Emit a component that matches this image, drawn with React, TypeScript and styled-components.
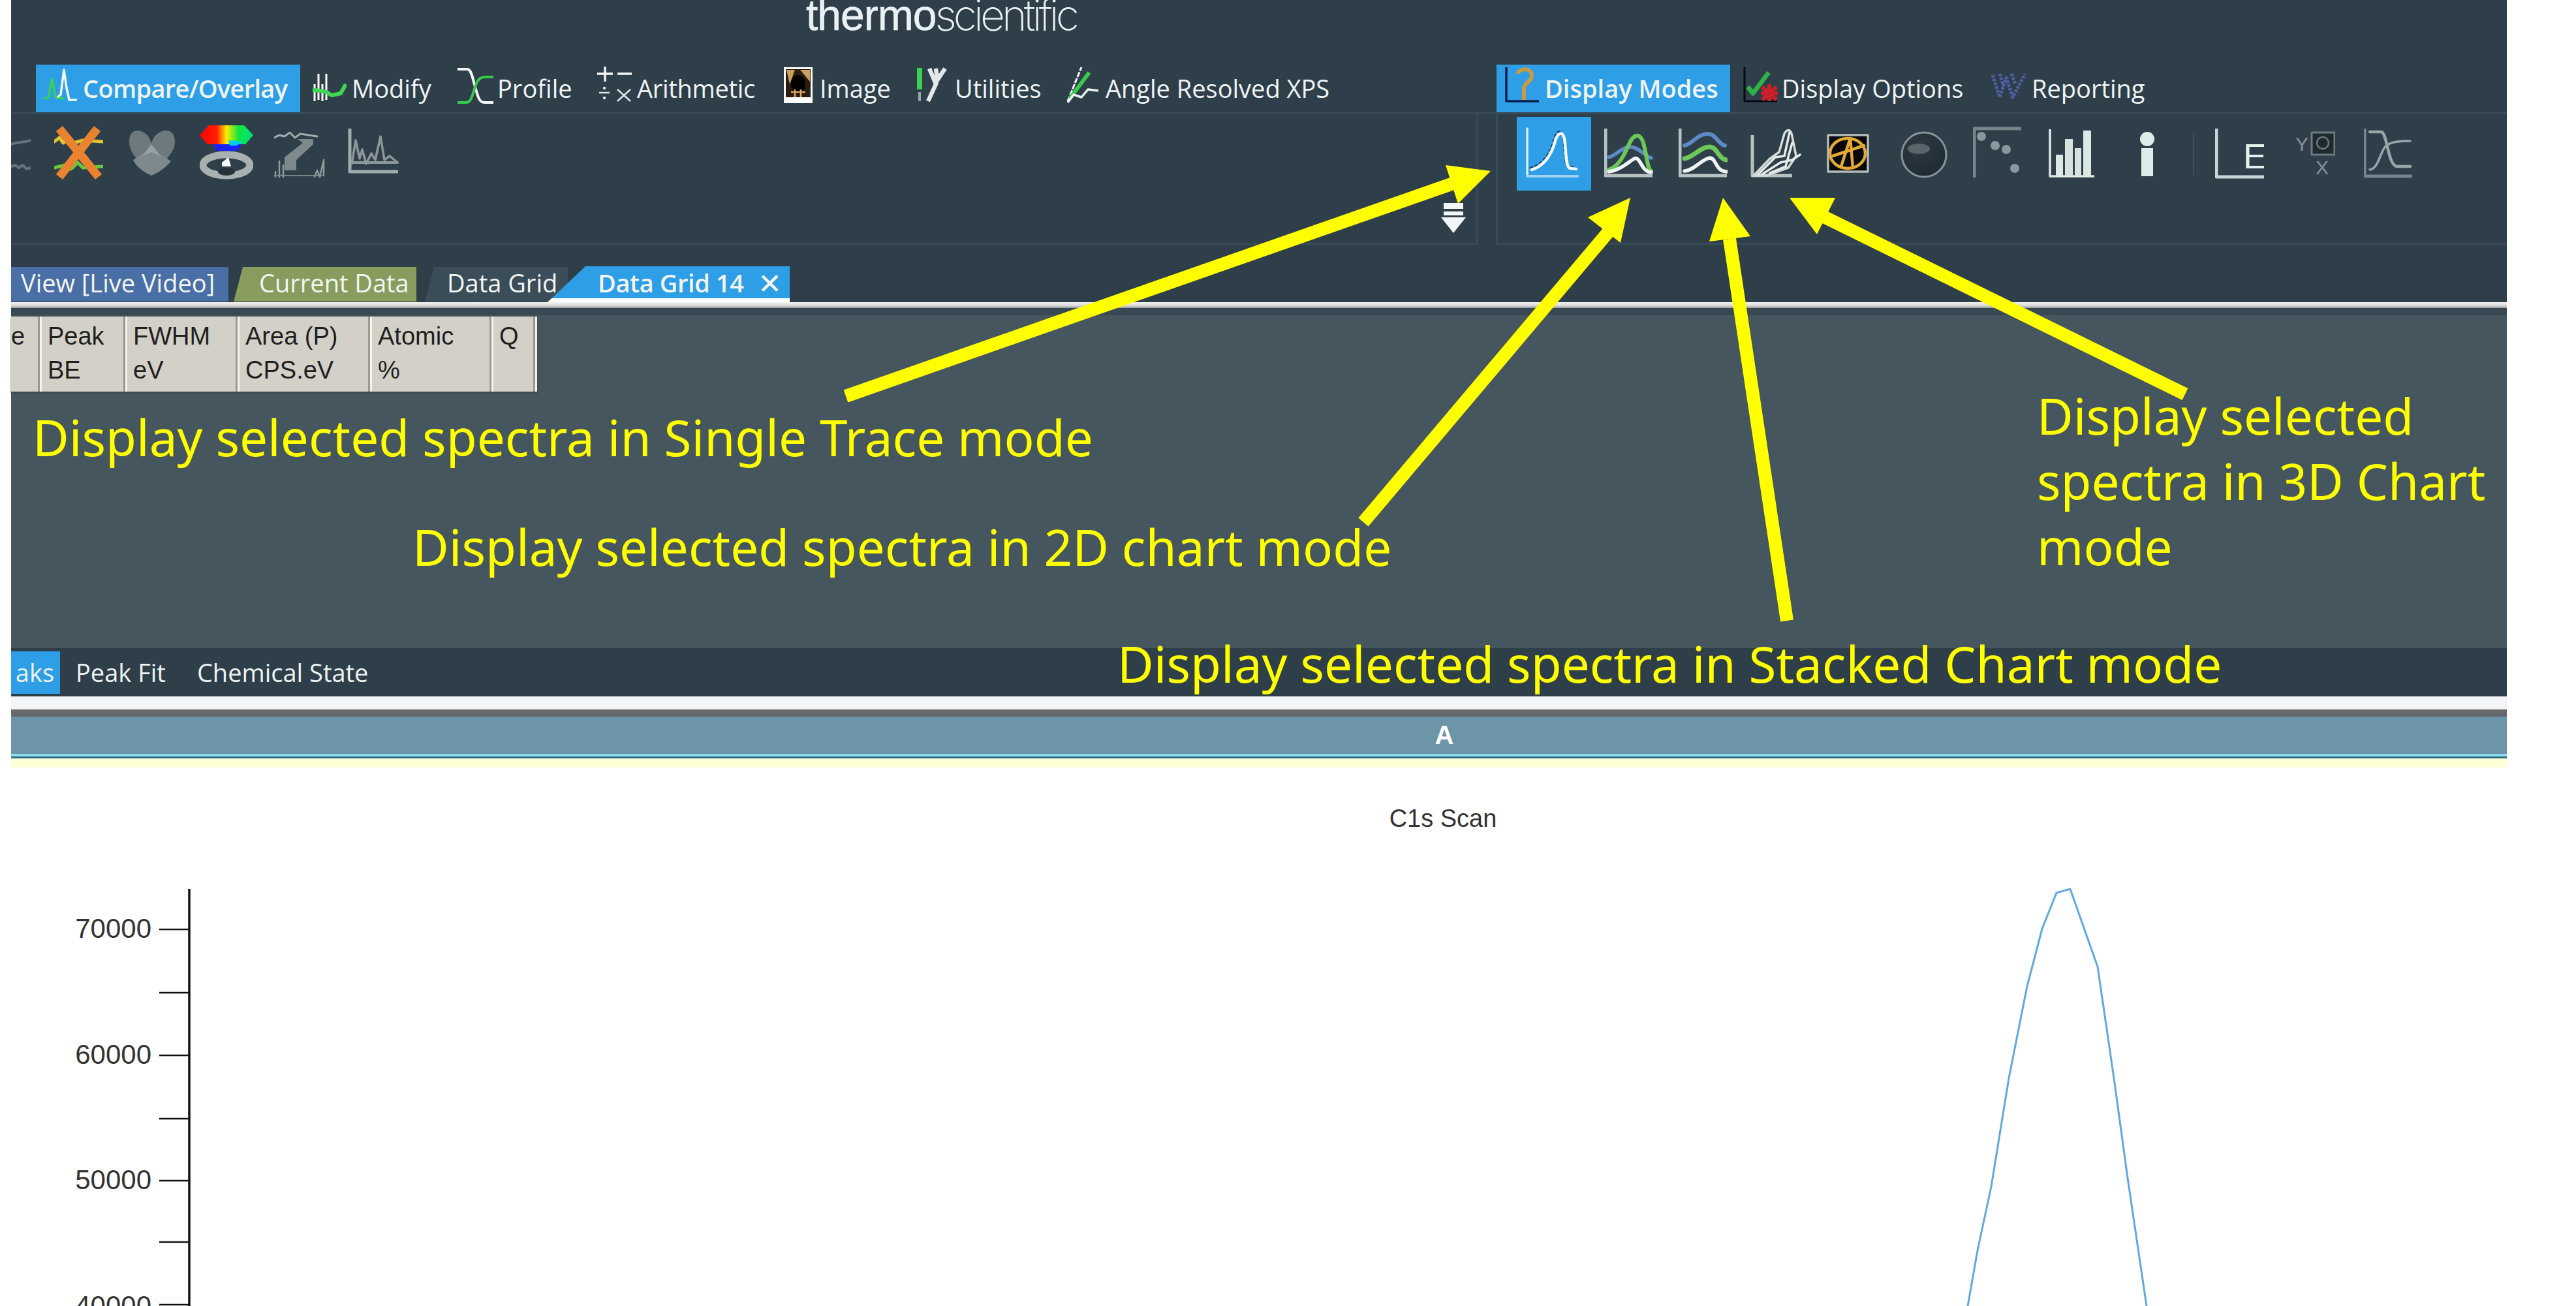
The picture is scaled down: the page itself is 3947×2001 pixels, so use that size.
import React from "react";
import styled, { createGlobalStyle } from "styled-components";

const Global = createGlobalStyle`
  html, body { margin: 0; padding: 0; background: #fff; overflow: hidden; }
  #root { width: 3947px; height: 2001px; }
`;

const UI = `"Open Sans", "Noto Sans", sans-serif`;
const DARK = "#2f3f4a";

const Stage = styled.div`
  position: relative;
  width: 3947px;
  height: 2001px;
  box-sizing: border-box;
  padding: 0 106px 0 17px;
  background: #fff;
  overflow: hidden;
  font-family: ${UI};
`;
const Frame = styled.div`
  display: flex;
  flex-direction: column;
  height: 100%;
`;
const Header = styled.header`
  flex: none;
  height: 463px;
  background: ${DARK};
  display: flex;
  flex-direction: column;
`;
const LogoRow = styled.div`
  height: 99px;
  padding-left: 1218px;
  display: flex;
  align-items: flex-start;
  color: #e9f1f4;
  font-size: 66px;
  line-height: 46px;
  white-space: nowrap;
`;
const LogoBold = styled.span`
  font-family: "Liberation Sans", sans-serif;
  letter-spacing: -1px;
  -webkit-text-stroke: 0.6px #e9f1f4;
`;
const LogoLight = styled.span`
  font-family: Inter, sans-serif;
  font-weight: 200;
  letter-spacing: -4.9px;
  margin-left: -2px;
`;
const MenuBar = styled.nav`
  height: 73px;
  display: flex;
  flex: none;
  padding-left: 38px;
`;
const MenuItem = styled.div<{ $w: number; $active?: boolean; $gap?: number; $iconGap?: number; $pad?: number; $bold?: boolean; $track?: number }>`
  width: ${(p) => p.$w}px;
  flex: none;
  box-sizing: border-box;
  margin-left: ${(p) => p.$gap ?? 0}px;
  padding-left: ${(p) => p.$pad ?? 0}px;
  display: flex;
  align-items: center;
  gap: ${(p) => p.$iconGap ?? 8}px;
  background: ${(p) => (p.$active ? "#2e9fe6" : "transparent")};
  color: #eef4f6;
  font-size: 38px;
  line-height: 67px;
  font-weight: ${(p) => (p.$bold ? 600 : 500)};
  letter-spacing: ${(p) => p.$track ?? 0}px;
  white-space: nowrap;
`;
const MenuIcon = styled.svg`
  display: block;
  flex: none;
  height: 73px;
`;
const Ribbon = styled.div`
  height: 203px;
  flex: none;
  display: flex;
  border-top: 3px solid #374a55;
  box-sizing: border-box;
`;
const RibbonPanel = styled.div<{ $w: number; $pad: number; $gapRight: number; $open?: boolean }>`
  position: relative;
  width: ${(p) => p.$w}px;
  margin-right: ${(p) => p.$gapRight}px;
  flex: none;
  box-sizing: border-box;
  padding: 4px 0 0 ${(p) => p.$pad}px;
  border-bottom: 3px solid #374a55;
  border-${(p) => (p.$open ? "left" : "right")}: 3px solid #374a55;
  display: flex;
  align-items: flex-start;
`;
const Tool = styled.div<{ $w: number; $gap?: number; $active?: boolean; $pad?: number }>`
  flex: none;
  width: ${(p) => p.$w}px;
  height: 113px;
  margin-left: ${(p) => p.$gap ?? 0}px;
  background: ${(p) => (p.$active ? "#2e9fe6" : "transparent")};
`;
const ToolIcon = styled.svg`
  display: block;
  width: 100%;
  height: 113px;
`;
const CollapseGlyph = styled.svg`
  position: absolute;
  left: 2191px;
  top: 135px;
  width: 38px;
  height: 48px;
`;
const TabStrip = styled.div`
  margin-top: 33px;
  height: 55px;
  display: flex;
  flex: none;
`;
const TabBase = styled.div<{ $w: number; $pad: number; $bg: string; $gap?: number; $slant?: number }>`
  flex: none;
  width: ${(p) => p.$w}px;
  margin-left: ${(p) => p.$gap ?? 0}px;
  height: 53px;
  margin-top: 1px;
  box-sizing: border-box;
  padding-left: ${(p) => p.$pad}px;
  background: ${(p) => p.$bg};
  color: #f2f6f4;
  font-size: 38px;
  line-height: 48px;
  white-space: nowrap;
  clip-path: polygon(${(p) => p.$slant ?? 0}px 0, 100% 0, 100% 100%, 0 100%);
`;
const ActiveTab = styled(TabBase)`
  position: relative;
  height: 55px;
  margin-top: 0;
  font-weight: 600;
  letter-spacing: -0.4px;
  display: flex;
  align-items: center;
  justify-content: space-between;
  padding-right: 12px;
  border-bottom: 6px solid #fff;
`;
const TabClose = styled.span`
  font-weight: 400;
  font-size: 44px;
`;
const WhiteRule = styled.div`
  flex: none;
  height: 9px;
  background: linear-gradient(#f4f4f4, #d8d8d8 60%, #8f9699);
`;
const GridArea = styled.section`
  flex: none;
  height: 521px;
  box-sizing: border-box;
  background: #46565f;
  border-top: 11px solid #394953;
`;
const GridHeader = styled.div`
  display: flex;
  height: 115px;
  margin-top: 2px;
  width: fit-content;
  box-shadow: 0 3px 2px #3a4850;
`;
const GridCell = styled.div<{ $w: number; $pad?: number }>`
  width: ${(p) => p.$w}px;
  box-sizing: border-box;
  padding: 4px 0 0 ${(p) => p.$pad ?? 9}px;
  background: #d3d0c8;
  border-right: 3px solid #f4f3ee;
  box-shadow: inset -3px 0 0 #9a988f;
  color: #1f1f1f;
  font-family: "Liberation Sans", sans-serif;
  font-size: 38px;
  line-height: 52px;
  white-space: pre-line;
  overflow: hidden;
`;
const BottomTabs = styled.div`
  flex: none;
  height: 74px;
  background: ${DARK};
  display: flex;
  align-items: center;
  color: #eef3f3;
  font-size: 38px;
`;
const BottomActive = styled.div`
  width: 75px;
  height: 65px;
  background: #2e9fe6;
  display: flex;
  align-items: center;
  justify-content: flex-end;
  padding-right: 9px;
  box-sizing: border-box;
  overflow: hidden;
`;
const BottomTab = styled.div<{ $gap: number }>`
  margin-left: ${(p) => p.$gap}px;
`;
const SectionRule = styled.div`
  flex: none;
  height: 31px;
  background: linear-gradient(#f3f4f5 0, #f3f4f5 64%, #6b6a6c 66%, #64686c 100%);
`;
const ChartBand = styled.div`
  flex: none;
  height: 64px;
  box-sizing: border-box;
  background: #6c95a8;
  border-bottom: 3px solid #2d6e80;
  box-shadow: inset 0 -4px 0 #8fdcf5;
  display: flex;
  align-items: center;
  justify-content: center;
  padding: 0 0 4px 568px;
  color: #fff;
  font-weight: 700;
  font-size: 40px;
  font-family: "Liberation Sans", sans-serif;
`;
const PaleStripe = styled.div`
  flex: none;
  height: 14px;
  background: #fdfdd8;
`;
const Chart = styled.svg`
  display: block;
  flex: 1;
  width: 100%;
  min-height: 0;
`;
const ChartOverlay = styled.svg`
  position: absolute;
  left: 0;
  top: 0;
  width: 3947px;
  height: 2001px;
  pointer-events: none;
`;
const Callout = styled.div<{ $x: number; $y: number; $w?: number }>`
  position: absolute;
  left: ${(p) => p.$x}px;
  top: ${(p) => p.$y}px;
  width: ${(p) => (p.$w ? `${p.$w}px` : "auto")};
  color: #ffff00;
  font-family: "Noto Sans", sans-serif;
  font-size: 76.4px;
  line-height: 100px;
  white-space: ${(p) => (p.$w ? "normal" : "nowrap")};
`;

const Menu = ({ w, children }: { w: number; children: React.ReactNode }) => (
  <MenuIcon width={w} viewBox={`0 0 ${w} 73`} fill="none" strokeLinejoin="round">
    {children}
  </MenuIcon>
);

const Tl = ({ w, children, ...rest }: { w: number; gap?: number; active?: boolean; children: React.ReactNode }) => (
  <Tool $w={w} $gap={rest.gap} $active={rest.active}>
    <ToolIcon viewBox={`0 0 ${w} 113`} fill="none" strokeLinejoin="round" strokeLinecap="round">
      {children}
    </ToolIcon>
  </Tool>
);

const GREY = "#b9c2c2";
const GREEN = "#6cc85a";
const BLUE = "#5f8bc4";

const arrows = [
  { tail: "1296,607 2258,270", head: "2284,262 2215,253 2234,312" },
  { tail: "2089,800 2474,344", head: "2498,303 2433,333 2483,372" },
  { tail: "2738,951 2650,366", head: "2640,303 2619,370 2682,362" },
  { tail: "3348,604 2790,330", head: "2742,303 2812,303 2784,359" },
];

const peak =
  "3015,2001 3030,1916 3051,1818 3078,1652 3106,1511 3129,1423 3151,1368 3172,1362 3214,1481 3239,1652 3260,1805 3289,2001";

export default function App() {
  return (
    <Stage>
      <Global />
      <Frame>
        <Header>
          <LogoRow>
            <LogoBold>thermo</LogoBold>
            <LogoLight>scientific</LogoLight>
          </LogoRow>
          <MenuBar>
            <MenuItem $w={405} $active $pad={11} $iconGap={7} $bold $track={-0.7}>
              <Menu w={54}>
                <path d="M1 52 L8 50 L14 22 L19 50 L32 52" stroke="#37d05a" strokeWidth="3.5" />
                <path d="M22 50 L27 46 L32 8 L36 36 L40 54 L52 54" stroke="#f2fbff" strokeWidth="3.5" />
              </Menu>
              Compare/Overlay
            </MenuItem>
            <MenuItem $w={222} $gap={18}>
              <Menu w={53}>
                <path d="M4 56 V30 M10 54 V14 M16 56 V30 M22 54 V14" stroke="#fff" strokeWidth="3" />
                <path d="M1 38 L22 42 L30 47 L44 44 L52 30" stroke="#3ed654" strokeWidth="6" />
              </Menu>
              Modify
            </MenuItem>
            <MenuItem $w={214} $iconGap={4}>
              <Menu w={58}>
                <path d="M1 7 H16 C22 7 24 20 28 34 C32 48 34 58 42 58 H56" stroke="#f5f8f8" strokeWidth="4" />
                <path d="M1 58 H14 C22 58 24 46 28 34 C32 22 36 19 44 19 H56" stroke="#37c94c" strokeWidth="4" />
              </Menu>
              Profile
            </MenuItem>
            <MenuItem $w={284} $track={-0.3}>
              <Menu w={54}>
                <path d="M1 14 H25 M13 3 V26 M32 14 H54" stroke="#f3f6f6" strokeWidth="3.5" />
                <path d="M4 43 H20 M32 38 L52 56 M52 38 L32 56" stroke="#dfe7e7" strokeWidth="2.5" />
                <circle cx="12" cy="36" r="2.2" fill="#dfe7e7" />
                <circle cx="12" cy="51" r="2.2" fill="#dfe7e7" />
              </Menu>
              Arithmetic
            </MenuItem>
            <MenuItem $w={204} $pad={2} $iconGap={10}>
              <Menu w={46}>
                <rect x="1" y="4" width="44" height="55" fill="#fff" />
                <rect x="4" y="7" width="38" height="43" fill="#2a1c10" />
                <path d="M5 8 L18 8 L10 30 Z M26 8 H41 V26 Z" fill="#c9a15a" />
                <ellipse cx="23" cy="30" rx="11" ry="14" fill="#000" />
                <path d="M12 42 H34 M18 38 V50 M27 38 V50" stroke="#d9a860" strokeWidth="2.5" />
              </Menu>
              Image
            </MenuItem>
            <MenuItem $w={229} $pad={2} $iconGap={7}>
              <Menu w={52}>
                <path d="M5 5 V38" stroke="#38d24f" strokeWidth="8" />
                <path d="M5 42 V56" stroke="#9aa6aa" strokeWidth="4" />
                <path d="M18 56 L30 30 L20 6 M30 30 L32 22 L30 6 M32 24 L44 6" stroke="#e3e8e8" strokeWidth="6.5" />
              </Menu>
              Utilities
            </MenuItem>
            <MenuItem $w={662} $pad={2} $iconGap={7}>
              <Menu w={54}>
                <path d="M3 56 L24 4" stroke="#f4f7f7" strokeWidth="3" strokeDasharray="8 2" />
                <path d="M6 52 L36 12" stroke="#37c94c" strokeWidth="6" />
                <path d="M3 58 L12 46 L24 50 L34 38 L50 40" stroke="#eef3f3" strokeWidth="3.5" />
              </Menu>
              Angle Resolved XPS
            </MenuItem>
            <MenuItem $w={358} $active $pad={12} $iconGap={8} $bold>
              <Menu w={54}>
                <path d="M3 4 V56 H53" stroke="#0a1c4e" strokeWidth="3.5" />
                <path d="M20 14 C24 5 42 4 42 17 C42 27 30 27 30 36 V54" stroke="#c99a45" strokeWidth="6" />
              </Menu>
              Display Modes
            </MenuItem>
            <MenuItem $w={380} $gap={19} $iconGap={5}>
              <Menu w={55}>
                <path d="M3 4 V56 H53" stroke="#050a14" strokeWidth="3" />
                <path d="M8 34 L16 44 L40 12" stroke="#2fb24a" strokeWidth="7" />
                <path d="M30 34 L52 54 M52 34 L30 54 M41 30 V56 M28 44 H54" stroke="#c9202a" strokeWidth="6" />
              </Menu>
              Display Options
            </MenuItem>
            <MenuItem $w={300} $iconGap={8}>
              <Menu w={55}>
                <path
                  d="M3 16 L14 50 L24 20 L34 50 L53 14 M14 14 L20 34 M32 14 L38 30"
                  stroke="#4f5ea8"
                  strokeWidth="5"
                  strokeDasharray="4 2"
                />
              </Menu>
              Reporting
            </MenuItem>
          </MenuBar>
          <Ribbon>
            <RibbonPanel $w={2248} $pad={0} $gapRight={27}>
              <Tl w={30}>
                <path d="M0 42 C10 38 18 40 30 36" stroke="#64727a" strokeWidth="4" />
                <path d="M0 76 L6 74 L12 78 L18 74 L24 80 L30 78" stroke="#64727a" strokeWidth="4" />
              </Tl>
              <Tl w={75} gap={36}>
                <path d="M0 38 L8 32 L14 40 L22 34 L30 40 L44 36 L74 38" stroke="#e4c436" strokeWidth="5" />
                <path d="M0 78 L16 74 L26 80 L36 70 L44 78 L74 76" stroke="#67c93c" strokeWidth="5" />
                <path d="M8 18 L68 92 M66 18 L8 92" stroke="#ea8330" strokeWidth="13" strokeLinecap="butt" />
              </Tl>
              <Tl w={74} gap={38}>
                <path d="M36 40 C30 18 2 12 2 38 C2 54 14 66 36 90 C58 66 72 54 72 38 C72 12 42 18 36 40 Z" fill="#6e797d" />
                <path d="M36 48 L66 68 C58 78 46 86 36 90 C26 86 12 76 8 66 Z" fill="#7d898d" />
                <path d="M36 42 L50 60 L36 54 L22 60 Z" fill="#99a3a6" />
              </Tl>
              <Tl w={82} gap={36}>
                <defs>
                  <linearGradient id="rb" x1="0" x2="1">
                    <stop offset="0" stopColor="#ff0000" />
                    <stop offset="0.32" stopColor="#ff2000" />
                    <stop offset="0.5" stopColor="#ffee00" />
                    <stop offset="0.72" stopColor="#14e63c" />
                    <stop offset="1" stopColor="#00e080" />
                  </linearGradient>
                </defs>
                <path d="M14 13 H68 L82 28 L70 42 H12 L0 28 Z" fill="url(#rb)" />
                <path d="M20 42 H64 L58 52 H26 Z" fill="#1a22ff" />
                <path d="M44 36 L68 38 L56 44 H46 Z" fill="#00cfee" />
                <ellipse cx="41" cy="74" rx="36" ry="16" stroke="#a9b0b0" strokeWidth="11" strokeDasharray="4 2" />
                <path d="M34 70 L44 62 L48 76 H34 Z" fill="#fff" />
                <ellipse cx="41" cy="84" rx="13" ry="6" fill="#26333b" />
              </Tl>
              <Tl w={78} gap={32}>
                <path d="M0 32 L8 28 L16 30 L24 24 L32 32 L40 26 L66 30" stroke="#a2acae" strokeWidth="3" strokeDasharray="3 1" />
                <path d="M36 34 H60 V42 L34 66 V82 H16 V62 L44 40" fill="#7e898c" />
                <path d="M8 92 V68 M2 92 V84 M14 92 V74 M62 92 L66 82 L70 92 L76 66 V90" stroke="#8f9a9c" strokeWidth="2.5" />
                <path d="M0 90 H76" stroke="#7f8a8d" strokeWidth="2" strokeDasharray="3 2" />
              </Tl>
              <Tl w={79} gap={35}>
                <path d="M3 18 V84 H77" stroke="#a0abae" strokeWidth="5" strokeLinecap="butt" />
                <path
                  d="M6 72 L12 36 L18 64 L22 50 L28 72 L36 56 L42 66 L50 30 L56 66 L64 60 L76 70"
                  stroke="#8c979a"
                  strokeWidth="3.5"
                />
                <path d="M8 70 H76" stroke="#8c979a" strokeWidth="4" strokeDasharray="6 2" />
              </Tl>
              <CollapseGlyph viewBox="0 0 38 46" fill="#f3f6f6">
                <rect x="4" y="0" width="30" height="9" />
                <rect x="4" y="13" width="30" height="6" />
                <path d="M0 22 H38 L19 46 Z" />
              </CollapseGlyph>
            </RibbonPanel>
            <RibbonPanel $w={1549} $pad={29} $gapRight={0} $open>
              <Tl w={114} active>
                <path d="M16 18 V91" stroke="#d6eef8" strokeWidth="3.5" />
                <path d="M16 91 H93" stroke="#9fd2f0" strokeWidth="4" />
                <path
                  d="M21 78 C36 75 50 60 56 38 C60 20 68 18 71 32 C74 50 72 75 80 76 L89 78"
                  stroke="#1c4a70"
                  strokeWidth="3"
                  strokeDasharray="3 5"
                />
                <path d="M23 81 C38 77 52 62 58 40 C62 24 70 20 73 34 C76 50 74 77 82 79 L91 80" stroke="#f5fbff" strokeWidth="4.5" />
              </Tl>
              <Tl w={75} gap={20}>
                <path d="M2 18 V90 H74" stroke={GREY} strokeWidth="5" strokeLinecap="butt" />
                <path d="M7 62 C16 60 28 46 40 46 C52 46 62 60 72 63" stroke={BLUE} strokeWidth="5.5" />
                <path d="M7 81 C22 76 30 60 38 42 C44 28 54 22 60 40 C66 62 66 80 72 83" stroke={GREEN} strokeWidth="6" />
                <path d="M7 84 C24 82 36 70 46 64 C56 60 56 84 72 85" stroke="#eef3f3" strokeWidth="5.5" />
              </Tl>
              <Tl w={75} gap={39}>
                <path d="M2 18 V90 H74" stroke={GREY} strokeWidth="5" strokeLinecap="butt" />
                <path d="M9 44 C20 42 30 26 44 26 C58 26 60 42 71 44" stroke={BLUE} strokeWidth="6" />
                <path d="M9 64 C22 62 34 46 47 46 C60 46 60 64 73 66" stroke={GREEN} strokeWidth="7" />
                <path d="M9 83 C24 82 36 64 48 63 C58 63 56 84 74 84" stroke="#eef3f3" strokeWidth="5.5" />
              </Tl>
              <Tl w={78} gap={35}>
                <path d="M3 28 V90 H64" stroke={GREY} strokeWidth="5" strokeLinecap="butt" />
                <path d="M5 90 L30 64 L44 54 L52 26 C56 18 62 18 64 30 L70 60 L58 78 L24 90 Z" stroke="#d5dcdc" strokeWidth="3.5" />
                <path d="M12 88 L38 62 L52 60 L60 24 M18 88 L46 70 L64 66 L76 58 M30 86 L54 76 L64 40" stroke="#e6ebeb" strokeWidth="3.5" />
              </Tl>
              <Tl w={65} gap={39}>
                <rect x="2" y="28" width="61" height="56" fill="#080808" stroke="#b4bcbc" strokeWidth="3.5" />
                <ellipse cx="32" cy="56" rx="27" ry="23" stroke="#e3a934" strokeWidth="4.5" />
                <path d="M36 33 L22 76 M36 33 L40 78 M9 60 L57 44" stroke="#e3a934" strokeWidth="4.5" />
              </Tl>
              <Tl w={72} gap={48}>
                <defs>
                  <radialGradient id="sp" cx="0.4" cy="0.3" r="0.8">
                    <stop offset="0" stopColor="#2c3a42" />
                    <stop offset="1" stopColor="#1d2a31" />
                  </radialGradient>
                </defs>
                <circle cx="36" cy="58" r="34" fill="url(#sp)" stroke="#87949a" strokeWidth="3" />
                <ellipse cx="28" cy="49" rx="17" ry="8" fill="#59656a" />
              </Tl>
              <Tl w={74} gap={39}>
                <path d="M74 18 H2 V93" stroke="#76868b" strokeWidth="5" strokeLinecap="butt" />
                <circle cx="13" cy="30" r="7" fill="#8a989d" />
                <circle cx="34" cy="44" r="7" fill="#8a989d" />
                <circle cx="51" cy="50" r="7" fill="#8a989d" />
                <circle cx="64" cy="79" r="7" fill="#8a989d" />
              </Tl>
              <Tl w={70} gap={42}>
                <path d="M2 19 V91 H70" stroke="#dfe9e6" strokeWidth="3.5" strokeLinecap="butt" />
                <rect x="11" y="58" width="11" height="32" fill="#dce8e4" />
                <rect x="25" y="34" width="12" height="56" fill="#d5e2de" />
                <rect x="40" y="48" width="10" height="42" fill="#d5e2de" />
                <rect x="53" y="21" width="12" height="69" fill="#dce8e4" />
              </Tl>
              <Tl w={24} gap={69}>
                <circle cx="12" cy="34" r="11" fill="#dceee9" />
                <rect x="3" y="48" width="18" height="43" fill="#dceee9" />
              </Tl>
              <Tl w={2} gap={58}>
                <path d="M1 24 V88" stroke="#3c505b" strokeWidth="2" />
              </Tl>
              <Tl w={75} gap={32}>
                <path d="M2 18 V92 H75" stroke="#c5d7d6" strokeWidth="5" strokeLinecap="butt" />
                <text x="43" y="79" fill="#e6f0ee" fontFamily="Liberation Sans, sans-serif" fontSize="54">
                  E
                </text>
              </Tl>
              <Tl w={64} gap={45}>
                <text x="3" y="52" fill="#85929a" fontFamily="Liberation Sans, sans-serif" fontSize="30">
                  Y
                </text>
                <rect x="28" y="24" width="35" height="34" fill="#1f2a30" stroke="#6e7a7f" strokeWidth="3" />
                <circle cx="45" cy="40" r="9" stroke="#6e7a7f" strokeWidth="2.5" />
                <text x="34" y="88" fill="#85929a" fontFamily="Liberation Sans, sans-serif" fontSize="30">
                  X
                </text>
              </Tl>
              <Tl w={74} gap={44}>
                <path d="M1 18 V91 H74" stroke="#74858c" strokeWidth="5" strokeLinecap="butt" />
                <path d="M9 23 H26 C36 23 36 72 50 76 H71" stroke="#98a4a8" strokeWidth="4.5" />
                <path d="M9 81 C24 80 26 44 38 42 C44 38 56 37 71 37" stroke="#98a4a8" strokeWidth="3.5" />
              </Tl>
            </RibbonPanel>
          </Ribbon>
          <TabStrip>
            <TabBase $w={333} $pad={15} $bg="#4a6ea6">
              View [Live Video]
            </TabBase>
            <TabBase $w={280} $pad={39} $bg="#889c5e" $gap={8} $slant={14}>
              Current Data
            </TabBase>
            <TabBase $w={219} $pad={34} $bg="#3b4d59" $gap={13} $slant={14}>
              Data Grid
            </TabBase>
            <ActiveTab $w={371} $pad={77} $bg="#2e9fe6" $gap={-31} $slant={58}>
              Data Grid 14
              <TabClose>✕</TabClose>
            </ActiveTab>
          </TabStrip>
        </Header>
        <WhiteRule />
        <GridArea>
          <GridHeader>
            <GridCell $w={47} $pad={0}>e</GridCell>
            <GridCell $w={131}>{"Peak\nBE"}</GridCell>
            <GridCell $w={172}>{"FWHM\neV"}</GridCell>
            <GridCell $w={203}>{"Area (P)\nCPS.eV"}</GridCell>
            <GridCell $w={186}>{"Atomic\n%"}</GridCell>
            <GridCell $w={67}>Q</GridCell>
          </GridHeader>
        </GridArea>
        <BottomTabs>
          <BottomActive>aks</BottomActive>
          <BottomTab $gap={24}>Peak Fit</BottomTab>
          <BottomTab $gap={48}>Chemical State</BottomTab>
        </BottomTabs>
        <SectionRule />
        <ChartBand>A</ChartBand>
        <PaleStripe />
        <Chart viewBox="17 1176 3824 825" preserveAspectRatio="none">
          <text x="2211" y="1267" textAnchor="middle" fontFamily="Liberation Sans, sans-serif" fontSize="38" fill="#333">
            C1s Scan
          </text>
          <path d="M290 1362 V2001" stroke="#111" strokeWidth="3.5" />
          {[1424, 1521, 1617, 1714, 1809, 1903, 1999].map((y) => (
            <path key={y} d={`M244 ${y} H290`} stroke="#111" strokeWidth="2.5" />
          ))}
          {[
            ["70000", 1422],
            ["60000", 1615],
            ["50000", 1807],
            ["40000", 2000],
          ].map(([t, y]) => (
            <text key={t} x="232" y={Number(y) + 15} textAnchor="end" fontFamily="Liberation Sans, sans-serif" fontSize="42" fill="#333">
              {t}
            </text>
          ))}
          <polyline points={peak} fill="none" stroke="#5ea9e4" strokeWidth="3" />
        </Chart>
      </Frame>
      <ChartOverlay viewBox="0 0 3947 2001">
        {arrows.map((a) => (
          <g key={a.head} fill="#ffff00">
            <polyline points={a.tail} fill="none" stroke="#ffff00" strokeWidth="20" />
            <polygon points={a.head} />
          </g>
        ))}
      </ChartOverlay>
      <Callout $x={50} $y={619}>Display selected spectra in Single Trace mode</Callout>
      <Callout $x={632} $y={787}>Display selected spectra in 2D chart mode</Callout>
      <Callout $x={1712} $y={966}>Display selected spectra in Stacked Chart mode</Callout>
      <Callout $x={3121} $y={586} $w={720}>Display selected spectra in 3D Chart mode</Callout>
    </Stage>
  );
}
